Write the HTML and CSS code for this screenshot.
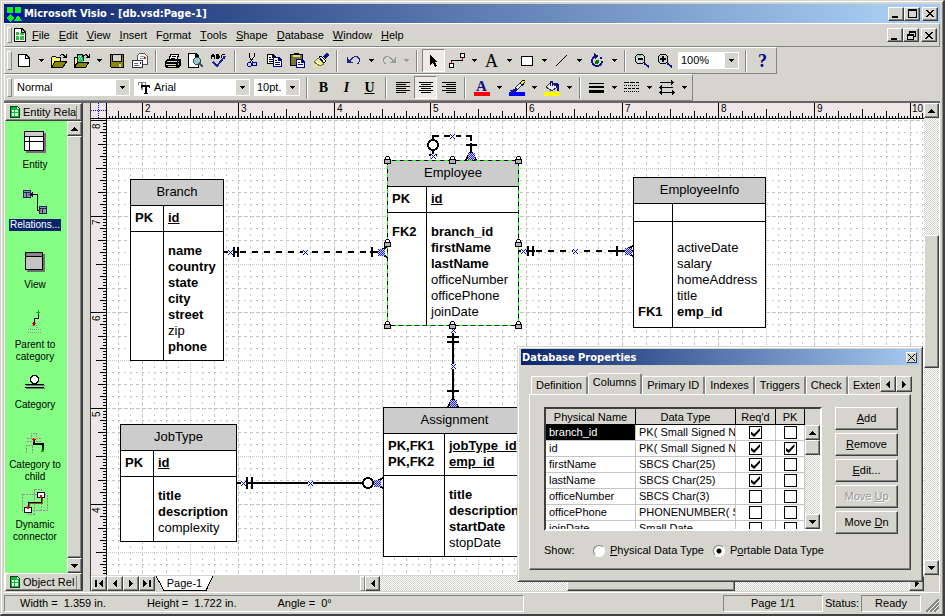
FILE: index.html
```html
<!DOCTYPE html>
<html lang="en">
<head>
<meta charset="utf-8">
<title>Microsoft Visio - [db.vsd:Page-1]</title>
<link rel="stylesheet" href="styles.css">
</head>
<body>
<svg class="defs" aria-hidden="true">
  <symbol id="down" viewBox="0 0 5 3"><path d="M0 0h5v1H0zM1 1h3v1H1zM2 2h1v1H2z"/></symbol>
  <symbol id="sdown" viewBox="0 0 7 4"><path d="M0 0h7v1H0zM1 1h5v1H1zM2 2h3v1H2zM3 3h1v1H3z"/></symbol>
  <symbol id="sup" viewBox="0 0 7 4"><path d="M0 3h7v1H0zM1 2h5v1H1zM2 1h3v1H2zM3 0h1v1H3z"/></symbol>
  <symbol id="sleft" viewBox="0 0 4 7"><path d="M3 0h1v7H3zM2 1h1v5H2zM1 2h1v3H1zM0 3h1v1H0z"/></symbol>
  <symbol id="sright" viewBox="0 0 4 7"><path d="M0 0h1v7H0zM1 1h1v5H1zM2 2h1v3H2zM3 3h1v1H3z"/></symbol>
  <symbol id="x" viewBox="0 0 8 7"><path d="M0 0h2v1H0zM1 1h2v1H1zM2 2h2v1H2zM3 3h2v1H3zM4 4h2v1H4zM5 5h2v1H5zM6 6h2v1H6zM6 0h2v1H6zM5 1h2v1H5zM4 2h2v1H4zM2 4h2v1H2zM1 5h2v1H1zM0 6h2v1H0z"/></symbol>
  <symbol id="stencil" viewBox="0 0 10 12"><path d="M0 0h7l3 3v9H0z" fill="#040"/><path d="M1 1h6l2 2v8H1z" fill="#0b4"/><path d="M7 1l2 2H7z" fill="#fff"/><path d="M2 4h2v2H2zM5 4h3v2H5zM2 7h2v3H2zM5 7h3v3H5z" fill="#efe"/></symbol>
  <symbol id="lock" viewBox="0 0 7 8"><path d="M2 0h3v1H2zM1 1h1v3H1zM5 1h1v3H5zM0 3h7v5H0z"/><path d="M2 1h3v2H2z" fill="#fff"/><path d="M1 4h5v3H1z" fill="#b4b4b4"/></symbol>
  <symbol id="glue" viewBox="0 0 5 5"><path d="M0 0h5v5H0z" fill="#fff"/><path d="M0 0h1v1H0zM4 0h1v1H4zM1 1h1v1H1zM3 1h1v1H3zM2 2h1v1H2zM1 3h1v1H1zM3 3h1v1H3zM0 4h1v1H0zM4 4h1v1H4z" fill="#00f"/></symbol>
  <symbol id="hash" viewBox="0 0 7 7"><path d="M0 0h7v7H0z" fill="#ccccf4"/><path d="M0 0h1v1H0zM2 0h1v1H2zM4 0h1v1H4zM6 0h1v1H6zM1 1h1v1H1zM3 1h1v1H3zM5 1h1v1H5zM0 2h1v1H0zM2 2h1v1H2zM4 2h1v1H4zM6 2h1v1H6zM1 3h1v1H1zM3 3h1v1H3zM5 3h1v1H5zM0 4h1v1H0zM2 4h1v1H2zM4 4h1v1H4zM6 4h1v1H6zM1 5h1v1H1zM3 5h1v1H3zM5 5h1v1H5zM0 6h1v1H0zM2 6h1v1H2zM4 6h1v1H4zM6 6h1v1H6z" fill="#22c"/></symbol>
</svg>

<div class="window">
  <header class="titlebar">
    <svg class="applogo" width="16" height="16"><path d="M0 0h16v16H0z" fill="#00c"/><circle cx="4" cy="4" r="3.5" fill="#0f0"/><path d="M9 1h6v6H9zM4 8l4 4-4 4-4-4zM12 9l4 6H8z" fill="#0f0"/></svg>
    <h1>Microsoft Visio - [db.vsd:Page-1]</h1>
    <div class="winbtns">
      <button aria-label="Minimize"><svg width="8" height="9"><path d="M0 7h6v2H0z"/></svg></button>
      <button aria-label="Maximize"><svg width="9" height="9"><path d="M0 0h9v9H0zM1 2v6h7V2z" fill-rule="evenodd"/></svg></button>
      <button class="apart" aria-label="Close"><svg width="8" height="7"><use href="#x"/></svg></button>
    </div>
  </header>

  <nav class="menubar">
    <svg class="docicon" width="12" height="14"><path d="M0 0h8l4 4v10H0z"/><path d="M1 1h6v4h4v8H1z" fill="#fff"/><path d="M8 2l2 2H8z" fill="#ccc"/><path d="M2 4h3v3H2zM6 5h4v2H6zM2 8h3v4H2zM6 8h4v4H6z" fill="#3b4"/></svg>
    <button><u>F</u>ile</button><button><u>E</u>dit</button><button><u>V</u>iew</button><button><u>I</u>nsert</button><button>F<u>o</u>rmat</button><button><u>T</u>ools</button><button><u>S</u>hape</button><button><u>D</u>atabase</button><button><u>W</u>indow</button><button><u>H</u>elp</button>
    <div class="winbtns">
      <button aria-label="Minimize document"><svg width="8" height="9"><path d="M0 7h6v2H0z"/></svg></button>
      <button aria-label="Restore document"><svg width="9" height="9"><path d="M2 0h7v6H7v3H0V3h2zM3 2v1h4v2h1V2zM1 5v3h5V5z" fill-rule="evenodd"/></svg></button>
      <button class="apart" aria-label="Close document"><svg width="8" height="7"><use href="#x"/></svg></button>
    </div>
  </nav>

  <div class="toolrow"><div class="toolbar">
    <button class="tb" aria-label="New"><svg width="12" height="13"><path d="M0 0h8l4 4v9H0z"/><path d="M1 1h6v4h4v7H1z" fill="#fff"/><path d="M8 2l2 2H8z" fill="#fff"/></svg></button>
    <button class="dd" aria-label="New options"><svg width="5" height="3"><use href="#down"/></svg></button>
    <button class="tb" aria-label="Open"><svg width="16" height="14"><path d="M0 3h1V2h4v1h5v4H0zM0 7h1v7H0z"/><path d="M1 3h4v1h4v3H5L2 12H1z" fill="#ff6"/><path d="M4 7h12l-4 6H1z" fill="#880" stroke="#000"/><path d="M9 1h1V0h3v1h1v1h1V0h1v4h-4V3h1V2h-1V1h-2v1H9z"/></svg></button>
    <button class="tb" aria-label="Open stencil"><svg width="16" height="14"><path d="M0 3h3V0h6l1 2v5H4l-3 6H0z"/><path d="M1 4h2v4l-2 3z" fill="#ff6"/><path d="M4 1h4v2h1v5H4z" fill="#2c6"/><path d="M4 2h1v1H4zM6 2h1v1H6zM5 4h1v1H5zM7 4h1v1H7zM4 6h1v1H4z" fill="#dfd"/><path d="M4 8h11l-3 5H1z" fill="#880" stroke="#000"/><path d="M10 1h1V0h2v1h1v1h1V0h1v4h-4V3h1V2h-1V1h-1v1h-1z"/></svg></button>
    <button class="dd" aria-label="Stencil options"><svg width="5" height="3"><use href="#down"/></svg></button>
    <button class="tb" aria-label="Save"><svg width="14" height="14"><path d="M0 0h14v14H1l-1-1z"/><path d="M1 1h1v7h10V1h1v12H1z" fill="#880"/><path d="M3 1h8v6H3zM9 10h2v3H9z" fill="#d4d3cc"/></svg></button>
    <button class="tb" aria-label="Mail"><svg width="16" height="15"><path d="M5 3l3-3h4l3 3v8H5z" fill="#fff" stroke="#555"/><path d="M8 3h5M8 5h5" stroke="#999"/><path d="M0 7h11v8H0z" fill="#333"/><path d="M1 8h9v6H1z" fill="#fff"/><path d="M2 10h4v1H2zM2 12h5v1H2z" fill="#667"/><path d="M8 9h1v2H8z" fill="#00c"/><path d="M12 4h2v2h-2z" fill="#c22"/></svg></button>
    <span class="sep"></span>
    <button class="tb" aria-label="Print"><svg width="16" height="14"><path d="M4 5l2-5h8l-2 5z" fill="#fff" stroke="#000"/><path d="M7 2h4M6 4h4" stroke="#000"/><path d="M0 7l3-2h12l1 1v5l-3 3H1l-1-2z"/><path d="M2 7h10v1H2zM1 10h10v1H1zM3 12h8v1H3z" fill="#ddd"/><path d="M13 7h1v1h-1zM13 9h1v2h-1z" fill="#aaa"/><path d="M8 10h2v1H8z" fill="#ff0"/></svg></button>
    <button class="tb" aria-label="Print preview"><svg width="16" height="15"><path d="M0 0h8l3 3v12H0z"/><path d="M1 1h6v3h3v10H1z" fill="#fff"/><circle cx="9" cy="8" r="3.5" fill="#9cc" stroke="#444"/><path d="M8 6h1v1H8z" fill="#0ff"/><path d="M11 10l4 4" stroke="#456" stroke-width="2"/></svg></button>
    <button class="tb" aria-label="Spelling"><svg width="16" height="16"><path d="M1 1h2v1h1v4H3V4H1v2H0V2h1zM5 1h3v2h1v2H8v1H5zM10 2h1V1h3v1h-3v3h3v1h-3V5h-1z"/><path d="M2 9l4 4 8-10" stroke="#22a" stroke-width="2" fill="none"/></svg></button>
    <span class="sep"></span>
    <button class="tb" aria-label="Cut"><svg width="10" height="15"><path d="M2 0v4l4 5M7 0v4L3 9" stroke="#000" fill="none" stroke-width="1"/><circle cx="2.500" cy="11.500" r="2" fill="none" stroke="#00a"/><circle cx="7.500" cy="11" r="2" fill="none" stroke="#00a"/></svg></button>
    <button class="tb" aria-label="Copy"><svg width="16" height="13"><path d="M0 0h6l3 3v7H0z"/><path d="M1 1h4v3h3v5H1z" fill="#fff"/><path d="M2 3h2v1H2zM2 5h5v1H2zM2 7h5v1H2z"/><path d="M6 3h6l3 3v7H6z" fill="#008"/><path d="M7 4h4v3h3v5H7z" fill="#fff"/><path d="M8 6h2v1H8zM8 8h5v1H8zM8 10h5v1H8z" fill="#008"/></svg></button>
    <button class="tb" aria-label="Paste"><svg width="16" height="15"><path d="M0 1h4V0h5v1h4v12H0z"/><path d="M1 2h11v10H1z" fill="#773"/><path d="M3 2h7v2H3z" fill="#dd8"/><path d="M6 6h6l3 3v6H6z" fill="#008"/><path d="M7 7h4v3h3v4H7z" fill="#fff"/><path d="M8 9h2v1H8zM8 11h5v1H8z" fill="#008"/></svg></button>
    <button class="tb" aria-label="Format painter"><svg width="16" height="15"><path d="M10 4l3-4h2l1 2-4 4z" fill="#118"/><path d="M6 4l2-1 5 5-2 2z" fill="#fff" stroke="#000"/><path d="M5 5l6 6-4 2-6-4z" fill="#ee4" stroke="#775"/><path d="M3 8l4 3M5 6l4 4" stroke="#fff"/><path d="M0 13h2v1H0zM3 13h2v1H3zM6 13h1v1H6z" fill="#ff0"/></svg></button>
    <span class="sep"></span>
    <button class="tb" aria-label="Undo"><svg width="14" height="9"><path d="M0 1h1v2h1v1h1V3h1V2h1V1h2V0h4v1h1v1h1v4h-1v2h-2V7h1V6h1V3h-1V2h-1V1H7v1H6v1H5v1H4v2h2v1H0z" fill="#228"/></svg></button>
    <button class="dd" aria-label="Undo options"><svg width="5" height="3"><use href="#down"/></svg></button>
    <button class="tb dim" aria-label="Redo" disabled><svg width="14" height="9"><path d="M14 1h-1v2h-1v1h-1V3h-1V2H9V1H7V0H3v1H2v1H1v4h1v2h2V7H3V6H2V3h1V2h1V1h3v1h1v1h1v1h1v2H8v1h6z"/></svg></button>
    <button class="dd dim" aria-label="Redo options" disabled><svg width="5" height="3"><use href="#down"/></svg></button>
    <span class="sep"></span>
    <button class="tb on" aria-label="Pointer tool"><svg width="8" height="12"><path d="M0 0l8 7H5l2 4-2 1-2-4-3 2z"/></svg></button>
    <button class="tb" aria-label="Connector tool"><svg width="16" height="15"><path d="M2 10V7h11V4" fill="none" stroke="#000" stroke-width="1"/><path d="M11 0h5v5h-5zM0 10h5v5H0z"/><path d="M12 1h3v3h-3zM1 11h3v3H1z" fill="#fff"/><path d="M13 5h1v2h-1zM2 8h1v2H2z" fill="#e00"/></svg></button>
    <button class="dd" aria-label="Connector options"><svg width="5" height="3"><use href="#down"/></svg></button>
    <button class="tb serif" aria-label="Text tool">A</button>
    <button class="dd" aria-label="Text options"><svg width="5" height="3"><use href="#down"/></svg></button>
    <button class="tb" aria-label="Rectangle tool"><svg width="12" height="10"><path d="M0 0h12v10H0z"/><path d="M1 1h10v8H1z" fill="#fff"/></svg></button>
    <button class="dd" aria-label="Rectangle options"><svg width="5" height="3"><use href="#down"/></svg></button>
    <button class="tb" aria-label="Line tool"><svg width="12" height="12"><path d="M0 11L11 0" stroke="#000"/></svg></button>
    <button class="dd" aria-label="Line options"><svg width="5" height="3"><use href="#down"/></svg></button>
    <button class="tb" aria-label="Rotation tool"><svg width="14" height="15"><path d="M6 3a5 5 0 1 0 6 5" fill="none" stroke="#118" stroke-width="2"/><path d="M4 0l5 3-4 3zM10 4h2v2h-2z" fill="#118"/><circle cx="7" cy="9" r="2" fill="#070"/></svg></button>
    <button class="dd" aria-label="Rotation options"><svg width="5" height="3"><use href="#down"/></svg></button>
    <span class="sep"></span>
    <button class="tb" aria-label="Zoom out"><svg width="16" height="15"><circle cx="6" cy="6" r="5" fill="#d4d3cc" stroke="#000"/><path d="M3 3h1v1H3zM5 2h2v1H5zM2 8h1v1H2z" fill="#0ee"/><path d="M4 5h5v2H4z"/><path d="M10 10l5 4" stroke="#118" stroke-width="2"/></svg></button>
    <button class="tb" aria-label="Zoom in"><svg width="16" height="15"><circle cx="6" cy="6" r="5" fill="#d4d3cc" stroke="#000"/><path d="M3 3h1v1H3zM2 8h1v1H2z" fill="#0ee"/><path d="M3 5h6v2H3zM5 3h2v6H5z"/><path d="M10 10l5 4" stroke="#118" stroke-width="2"/></svg></button>
    <span class="combo zoom"><select aria-label="Zoom"><option>100%</option></select><span class="combo-arrow"><svg width="5" height="3"><use href="#down"/></svg></span></span>
    <span class="sep"></span>
    <button class="tb serif help" aria-label="Help">?</button>
  </div></div>

  <div class="toolrow"><div class="toolbar">
    <span class="combo style"><select aria-label="Style"><option>Normal</option></select><span class="combo-arrow"><svg width="5" height="3"><use href="#down"/></svg></span></span>
    <span class="combo font"><svg class="tt" width="12" height="12"><path d="M0 0h8v3H7V1H5v7H3V1H1v2H0z" fill="#888"/><path d="M3 3h9v3h-1V5H9v6h1v1H6v-1h1V5H4v1H3z"/></svg><select aria-label="Font"><option>Arial</option></select><span class="combo-arrow"><svg width="5" height="3"><use href="#down"/></svg></span></span>
    <span class="combo size"><select aria-label="Font size"><option>10pt.</option></select><span class="combo-arrow"><svg width="5" height="3"><use href="#down"/></svg></span></span>
    <span class="sep"></span>
    <button class="tb fmt" aria-label="Bold"><b>B</b></button>
    <button class="tb fmt" aria-label="Italic"><i>I</i></button>
    <button class="tb fmt" aria-label="Underline"><u>U</u></button>
    <span class="sep"></span>
    <button class="tb" aria-label="Align left"><svg width="14" height="11"><path d="M0 0h14v1H0zM0 2h10v1H0zM0 4h14v1H0zM0 6h10v1H0zM0 8h14v1H0zM0 10h10v1H0z"/></svg></button>
    <button class="tb on" aria-label="Center"><svg width="14" height="11"><path d="M0 0h14v1H0zM2 2h10v1H2zM0 4h14v1H0zM2 6h10v1H2zM0 8h14v1H0zM2 10h10v1H2z"/></svg></button>
    <button class="tb" aria-label="Align right"><svg width="14" height="11"><path d="M0 0h14v1H0zM4 2h10v1H4zM0 4h14v1H0zM4 6h10v1H4zM0 8h14v1H0zM4 10h10v1H4z"/></svg></button>
    <span class="sep"></span>
    <button class="tb swatch red" aria-label="Font color"><span>A</span></button>
    <button class="dd" aria-label="Font color options"><svg width="5" height="3"><use href="#down"/></svg></button>
    <button class="tb" aria-label="Line color"><svg width="16" height="16"><path d="M11 3l3-3h2v2l-3 4z" fill="#ee0" stroke="#000"/><path d="M6 8l5-5 2 2-5 5z" fill="#fff" stroke="#226"/><path d="M0 10h3l4-2 2 2-3 2H2z" fill="#118"/><path d="M0 12h16v4H0z" fill="#00f"/></svg></button>
    <button class="dd" aria-label="Line color options"><svg width="5" height="3"><use href="#down"/></svg></button>
    <button class="tb" aria-label="Fill color"><svg width="16" height="16"><path d="M2 7l5-5 6 5-5 4z" fill="#e8e8e8" stroke="#333"/><path d="M6 6V1h2v5" fill="none" stroke="#118"/><path d="M10 3h3l2 2v6h-2V7z" fill="#118"/><path d="M0 12h16v4H0z" fill="#ff0"/></svg></button>
    <button class="dd" aria-label="Fill color options"><svg width="5" height="3"><use href="#down"/></svg></button>
    <span class="sep"></span>
    <button class="tb" aria-label="Line weight"><svg width="15" height="10"><path d="M0 0h15v1H0zM0 3h15v2H0zM0 7h15v3H0z"/></svg></button>
    <button class="dd" aria-label="Line weight options"><svg width="5" height="3"><use href="#down"/></svg></button>
    <button class="tb" aria-label="Line pattern"><svg width="15" height="11"><path d="M0 .5h15" stroke="#000" stroke-dasharray="5 1"/><path d="M0 3.500h15M0 9.500h15" stroke="#000" stroke-dasharray="1 1"/><path d="M0 6.500h15" stroke="#000" stroke-dasharray="3 1"/></svg></button>
    <button class="dd" aria-label="Line pattern options"><svg width="5" height="3"><use href="#down"/></svg></button>
    <button class="tb" aria-label="Line ends"><svg width="16" height="15"><path d="M1 2h14v1H1zM12 0h1v5h-1zM13 1h1v3h-1zM0 7h14v1H0zM2 5h1v5H2zM1 6h1v3H1zM0 12h16v1H0zM2 10h1v5H2zM1 11h1v3H1zM13 10h1v5h-1zM14 11h1v3h-1z"/></svg></button>
    <button class="dd" aria-label="Line ends options"><svg width="5" height="3"><use href="#down"/></svg></button>
  </div></div>

  <main class="workspace">
    <aside class="stencils">
      <button class="stencil-head"><svg width="10" height="12"><use href="#stencil"/></svg><span>Entity Rela</span></button>
      <div class="stencil-body">
        <ul class="shapes">
          <li><svg width="22" height="22"><path d="M2 2h20v20H2z" fill="#767"/><path d="M0 0h20v20H0z"/><path d="M1 1h18v4H1z" fill="#ccc"/><path d="M1 6h4v4H1zM6 6h13v4H6zM1 11h4v8H1zM6 11h13v8H6z" fill="#fff"/></svg><span>Entity</span></li>
          <li class="selected"><svg width="24" height="24"><path d="M0 0h8v8H0zM16 16h8v8h-8z" fill="#225"/><path d="M1 1h6v1H1zM1 3h2v4H1zM4 3h3v4H4zM17 17h6v1h-6zM17 19h2v4h-2zM20 19h3v4h-3z" fill="#89b"/><path d="M6 4h8v16h3" fill="none" stroke="#000"/><path d="M7 4l3-3v7z" fill="#005"/><path d="M5 4h2v1H5zM16 20h2v1h-2z" fill="#e00"/></svg><span>Relations...</span></li>
          <li><svg width="20" height="20"><path d="M2 2h18v18H2z" fill="#676"/><path d="M0 0h18v18H0z"/><path d="M1 1h16v3H1z" fill="#888"/><path d="M1 5h16v12H1z" fill="#c4c4c4"/></svg><span>View</span></li>
          <li><svg width="16" height="24"><path d="M11 2v6H7v7" fill="none" stroke="#000"/><path d="M11 0h1v4h-1zM9 2h4v1H9z" fill="#0b0"/><path d="M6 12h1v4H6zM5 13h4v1H5z" fill="#e00"/><path d="M3 19a4 4 0 0 1 8 0M1 19.500h13M1 22.500h13" fill="none" stroke="#989" stroke-dasharray="1 1"/></svg><span>Parent to category</span></li>
          <li><svg width="20" height="14"><path d="M1 10h19v1H1zM1 13h19v1H1z" fill="#777"/><path d="M0 9h19v1H0zM0 12h19v1H0z"/><circle cx="9.500" cy="4.500" r="4" fill="#fff" stroke="#000" stroke-width="1.500"/></svg><span>Category</span></li>
          <li><svg width="20" height="24"><path d="M6 7V3h5v4M2 8.500h14M2 11.500h14M1.500 23v-8h6v8" fill="none" stroke="#989" stroke-dasharray="2 1"/><path d="M9 10v4h9v7" fill="none" stroke="#000" stroke-width="2"/><path d="M8 8h1v4H8zM7 9h4v1H7z" fill="#e00"/><path d="M16 20h3v2h-3z" fill="#0b0"/></svg><span>Category to child</span></li>
          <li><svg width="26" height="26"><path d="M.5 5.500h19v16H.5zM12.500.5h7v13h-7zM19 5.500h6v16h-8M6 12v13h6V14" fill="none" stroke="#989" stroke-dasharray="2 1"/><path d="M7 19v-5h13V8" fill="none" stroke="#860" stroke-width="2"/><path d="M6 18v-5h13V7" fill="none" stroke="#000"/><path d="M15 3h7v5h-7zM2 18h7v5H2z" fill="#fff" stroke="#000"/><path d="M18 6h2v3h-2zM5 17h2v3H5z" fill="#e00"/></svg><span>Dynamic connector</span></li>
        </ul>
        <div class="vscroll">
          <button class="sb" aria-label="Scroll up"><svg width="7" height="4"><use href="#sup"/></svg></button>
          <div class="thumb"></div>
          <button class="sb" aria-label="Scroll down"><svg width="7" height="4"><use href="#sdown"/></svg></button>
        </div>
      </div>
      <button class="stencil-head"><svg width="10" height="12"><use href="#stencil"/></svg><span>Object Rel</span></button>
    </aside>

    <section class="drawing">
      <div class="corner"><svg width="15" height="15"><path d="M0 7.500h15M7.500 0v15" stroke="#00f" stroke-dasharray="1 1"/></svg></div>
      <svg class="hruler" width="100%" height="16">
        <defs><pattern id="ht" x="35" width="96" height="16" patternUnits="userSpaceOnUse">
          <path d="M.5 0v16M48.500 6v10M24.500 8v8M72.500 8v8M12.500 10v6M36.500 10v6M60.500 10v6M84.500 10v6" stroke="#000"/>
          <path d="M3 14.500h93" stroke="#000" stroke-width="3" stroke-dasharray="1 2"/>
        </pattern></defs>
        <rect width="100%" height="16" fill="url(#ht)"/>
        <g class="rnum"><text x="38" y="9">2</text><text x="134" y="9">3</text><text x="230" y="9">4</text><text x="326" y="9">5</text><text x="422" y="9">6</text><text x="518" y="9">7</text><text x="614" y="9">8</text><text x="710" y="9">9</text><text x="805" y="9">10</text></g>
      </svg>
      <svg class="vruler" width="15" height="100%">
        <defs><pattern id="vt" y="1" width="16" height="96" patternUnits="userSpaceOnUse">
          <path d="M0 .5h15M5 48.500h11M7 24.500h9M7 72.500h9M9 12.500h7M9 36.500h7M9 60.500h7M9 84.500h7" stroke="#000"/>
          <path d="M13.500 3v93" stroke="#000" stroke-width="3" stroke-dasharray="1 2"/>
        </pattern></defs>
        <rect width="15" height="100%" fill="url(#vt)"/>
        <g class="rnum"><text transform="translate(9 10) rotate(-90)">8</text><text transform="translate(9 106) rotate(-90)">7</text><text transform="translate(9 202) rotate(-90)">6</text><text transform="translate(9 298) rotate(-90)">5</text><text transform="translate(9 394) rotate(-90)">4</text></g>
      </svg>
      <div class="vscroll main">
        <button class="sb" aria-label="Scroll up"><svg width="7" height="4"><use href="#sup"/></svg></button>
        <div class="track"></div><div class="thumb"></div><div class="track long"></div>
        <button class="sb" aria-label="Scroll down"><svg width="7" height="4"><use href="#sdown"/></svg></button>
      </div>

      <div class="canvas">
        <svg class="grid" width="100%" height="100%">
          <defs><pattern id="gp" x="35" y="1" width="96" height="96" patternUnits="userSpaceOnUse">
            <g stroke="#c3c3c3" fill="none">
              <path d="M.5 0v96M0 .5h96" stroke-dasharray="4 2"/>
              <path d="M24.500 0v96M72.500 0v96M0 24.500h96M0 72.500h96" stroke-dasharray="3 3"/>
              <path d="M48.500 0v96M0 48.500h96" stroke-dasharray="1 1"/>
              <path d="M12.500 0v96M36.500 0v96M60.500 0v96M84.500 0v96M0 12.500h96M0 36.500h96M0 60.500h96M0 84.500h96" stroke-dasharray="2 4"/>
            </g>
          </pattern></defs>
          <rect width="100%" height="100%" fill="url(#gp)"/>
        </svg>

        <article class="entity branch"><h2>Branch</h2>
          <div class="row"><p>PK</p><p><u>id</u></p></div>
          <div class="row attrs"><p></p><p>name<br>country<br>state<br>city<br>street<br><span>zip</span><br>phone</p></div>
        </article>
        <article class="entity employee"><h2>Employee</h2>
          <div class="row"><p>PK</p><p><u>id</u></p></div>
          <div class="row attrs"><p>FK2</p><p>branch_id<br>firstName<br>lastName<br><span>officeNumber<br>officePhone<br>joinDate</span></p></div>
        </article>
        <article class="entity info"><h2>EmployeeInfo</h2>
          <div class="row empty"><p></p><p></p></div>
          <div class="row attrs"><p>FK1</p><p><span>activeDate<br>salary<br>homeAddress<br>title</span><br>emp_id</p></div>
        </article>
        <article class="entity jobtype"><h2>JobType</h2>
          <div class="row"><p>PK</p><p><u>id</u></p></div>
          <div class="row attrs"><p></p><p>title<br>description<br><span>complexity</span></p></div>
        </article>
        <article class="entity assignment"><h2>Assignment</h2>
          <div class="row"><p>PK,FK1<br>PK,FK2</p><p><u>jobType_id</u><br><u>emp_id</u></p></div>
          <div class="row attrs"><p></p><p>title<br>description<br>startDate<br><span>stopDate</span></p></div>
        </article>

        <svg class="links" width="100%" height="100%"><g transform="translate(-107 -119)">
          <g fill="none" stroke="#000" stroke-width="2">
            <path d="M240 252h132M536 251h80" stroke-dasharray="6 6"/>
            <path d="M224 252h14M370 252h10M519 251h16M614 251h10M237 483h126M453 326v81"/>
            <path d="M433 140v-4h6M444 136h6M456 136h5M466 136h5v5M471 143v11M433 150v8"/>
            <path d="M234 247v10M238 247v10M372 247v10M528 246v10M533 246v10M617 246v10M247 477v12M252 477v12M447 337h12M447 342h12M447 391h12M466 145h11M429 155h8"/>
            <path d="M378 252l9-5M378 252l9 5M624 251l9-5M624 251l9 5M624 251h9M373 483l10-5M373 483l10 5M453 398l-5 9M453 398l5 9M471 151l-5 9M471 151l5 9"/>
            <circle cx="433" cy="145" r="5" fill="#fff"/><circle cx="368" cy="483" r="5" fill="#fff"/>
          </g>
          <use href="#glue" x="228" y="250" width="5" height="5"/><use href="#glue" x="303" y="250" width="5" height="5"/><use href="#glue" x="521" y="249" width="5" height="5"/><use href="#glue" x="573" y="249" width="5" height="5"/><use href="#glue" x="241" y="481" width="5" height="5"/><use href="#glue" x="308" y="481" width="5" height="5"/><use href="#glue" x="451" y="328" width="5" height="5"/><use href="#glue" x="451" y="364" width="5" height="5"/><use href="#glue" x="450" y="134" width="5" height="5"/><use href="#glue" x="431" y="154" width="5" height="5"/>
          <use href="#hash" x="378" y="249" width="7" height="7"/><use href="#hash" x="625" y="248" width="7" height="7"/><use href="#hash" x="374" y="480" width="7" height="7"/><use href="#hash" x="450" y="400" width="7" height="7"/><use href="#hash" x="468" y="153" width="7" height="7"/>
          <rect x="387.500" y="160.500" width="131" height="165" fill="none" stroke="#000"/>
          <rect x="387.500" y="160.500" width="131" height="165" fill="none" stroke="#0f0" stroke-dasharray="4 4"/>
          <use href="#lock" x="384" y="156" width="7" height="8"/><use href="#lock" x="449" y="156" width="7" height="8"/><use href="#lock" x="515" y="156" width="7" height="8"/><use href="#lock" x="384" y="239" width="7" height="8"/><use href="#lock" x="515" y="239" width="7" height="8"/><use href="#lock" x="384" y="321" width="7" height="8"/><use href="#lock" x="449" y="321" width="7" height="8"/><use href="#lock" x="515" y="321" width="7" height="8"/>
        </g></svg>
      </div>

      <div class="pagebar">
        <div class="pagenav">
          <button class="sb" aria-label="First page"><svg width="8" height="7"><path d="M0 0h2v7H0z"/><use href="#sleft" x="4" width="4" height="7"/></svg></button>
          <button class="sb" aria-label="Previous page"><svg width="4" height="7"><use href="#sleft"/></svg></button>
          <button class="sb" aria-label="Next page"><svg width="4" height="7"><use href="#sright"/></svg></button>
          <button class="sb" aria-label="Last page"><svg width="8" height="7"><path d="M6 0h2v7H6z"/><use href="#sright" x="0" width="4" height="7"/></svg></button>
        </div>
        <button class="pagetab"><svg width="57" height="15"><path d="M0 0l8 15h42l7-15z" fill="#fff"/><path d="M0 0l8 14.500h42L57 0" fill="none" stroke="#000"/></svg><span>Page-1</span></button>
        <div class="hscroll">
          <span class="split"></span>
          <button class="sb" aria-label="Scroll left"><svg width="4" height="7"><use href="#sleft"/></svg></button>
          <div class="track"></div><div class="thumb"></div><div class="track short"></div>
          <button class="sb" aria-label="Scroll right"><svg width="4" height="7"><use href="#sright"/></svg></button>
        </div>
      </div>
    </section>

    <section class="dialog" role="dialog" aria-labelledby="dlg-title">
      <header><h2 id="dlg-title">Database Properties</h2><button aria-label="Close dialog"><svg width="7" height="7"><path d="M0 0l7 7M7 0L0 7" stroke="#000"/></svg></button></header>
      <div class="tabs">
        <button>Definition</button><button class="active">Columns</button><button>Primary ID</button><button>Indexes</button><button>Triggers</button><button>Check</button><button class="cut">Extend</button>
        <span class="tabnav"><button class="sb" aria-label="Previous tab"><svg width="4" height="7"><use href="#sleft"/></svg></button><button class="sb" aria-label="Next tab"><svg width="4" height="7"><use href="#sright"/></svg></button></span>
      </div>
      <div class="pane">
        <div class="listbox">
          <div class="tablewrap"><table>
            <thead><tr><th>Physical Name</th><th>Data Type</th><th>Req'd</th><th>PK</th></tr></thead>
            <tbody>
              <tr><td class="sel">branch_id</td><td>PK( Small Signed N</td><td><input type="checkbox" aria-label="branch_id required" checked></td><td><input type="checkbox" aria-label="branch_id primary key"></td></tr>
              <tr><td>id</td><td>PK( Small Signed N</td><td><input type="checkbox" aria-label="id required" checked></td><td><input type="checkbox" aria-label="id primary key" checked></td></tr>
              <tr><td>firstName</td><td>SBCS Char(25)</td><td><input type="checkbox" aria-label="firstName required" checked></td><td><input type="checkbox" aria-label="firstName primary key"></td></tr>
              <tr><td>lastName</td><td>SBCS Char(25)</td><td><input type="checkbox" aria-label="lastName required" checked></td><td><input type="checkbox" aria-label="lastName primary key"></td></tr>
              <tr><td>officeNumber</td><td>SBCS Char(3)</td><td><input type="checkbox" aria-label="officeNumber required"></td><td><input type="checkbox" aria-label="officeNumber primary key"></td></tr>
              <tr><td>officePhone</td><td>PHONENUMBER( S</td><td><input type="checkbox" aria-label="officePhone required"></td><td><input type="checkbox" aria-label="officePhone primary key"></td></tr>
              <tr><td>joinDate</td><td>Small Date</td><td><input type="checkbox" aria-label="joinDate required"></td><td><input type="checkbox" aria-label="joinDate primary key"></td></tr>
            </tbody>
          </table></div>
          <div class="vscroll">
            <button class="sb" aria-label="Scroll up"><svg width="7" height="4"><use href="#sup"/></svg></button>
            <div class="thumb"></div><div class="track"></div>
            <button class="sb" aria-label="Scroll down"><svg width="7" height="4"><use href="#sdown"/></svg></button>
          </div>
        </div>
        <div class="actions">
          <button><u>A</u>dd</button><button><u>R</u>emove</button><button><u>E</u>dit...</button><button disabled>Move <u>U</u>p</button><button>Move <u>D</u>n</button>
        </div>
        <div class="show"><span>Show:</span>
          <label><input type="radio" name="show"><span><u>P</u>hysical Data Type</span></label>
          <label><input type="radio" name="show" checked><span>P<u>o</u>rtable Data Type</span></label>
        </div>
      </div>
    </section>
  </main>

  <footer class="status">
    <div class="cell dims"><span>Width =&nbsp; 1.359 in.</span><span>Height =&nbsp; 1.722 in.</span><span>Angle =&nbsp; 0°</span></div>
    <div class="fill"></div>
    <div class="cell page">Page 1/1</div>
    <span class="lbl">Status:</span>
    <div class="cell ready">Ready</div>
    <svg class="sizer" width="13" height="13"><path d="M0 13L13 0M4 13l9-9M8 13l5-5" stroke="#888" stroke-width="2"/><path d="M2 13L13 2M6 13l7-7M10 13l3-3" stroke="#fff"/></svg>
  </footer>
</div>
</body>
</html>
```
FILE: styles.css
```css
:root {
  --face: #d5d4cd;
  --shade: #848484;
  --dark: #404040;
  --ui: "Liberation Sans", Arial, sans-serif;
  --title: "DejaVu Sans Condensed", "DejaVu Sans", sans-serif;
}
* { box-sizing: border-box; }
body { margin: 0; font: 11px/13px var(--ui); color: #000; background: var(--face); }
button { font: inherit; color: inherit; padding: 0; margin: 0; border: 0; background: none; display: flex; align-items: center; justify-content: center; white-space: pre; }
h1, h2, p, ul { margin: 0; padding: 0; }
svg { display: block; shape-rendering: crispEdges; flex: none; }
.defs { position: absolute; width: 0; height: 0; }

.window { height: 100vh; display: flex; flex-direction: column; padding: 2px 3px 1px 2px; border: 1px solid var(--face); border-right: 2px solid var(--dark); border-bottom: 2px solid var(--dark); box-shadow: inset 1px 1px #fff, inset -1px 0 var(--shade); overflow: hidden; }
.titlebar { display: flex; align-items: center; height: 19px; margin: 1px 0 0 1px; padding: 0 2px; gap: 2px; background: linear-gradient(90deg, #0a246a, #a6caf0 94%); color: #fff; }
.titlebar h1 { font: bold 11px/16px var(--title); flex: 1; }
.winbtns { display: flex; margin-left: auto; color: #000; }
.winbtns button { width: 16px; height: 14px; background: var(--face); border: 1px solid; border-color: #fff var(--dark) var(--dark) #fff; box-shadow: inset -1px -1px var(--shade); }
.winbtns .apart { margin-left: 2px; }

.menubar { display: flex; align-items: center; height: 24px; margin-left: 1px; padding: 0 2px 0 9px; border: 1px solid; border-color: #fff var(--shade) var(--shade) #fff; }
.menubar > button { padding: 0 4px 0 5px; }
.docicon { margin-right: 1px; }
.menubar, .toolbar { position: relative; }
.menubar::before, .toolbar::before { content: ""; position: absolute; left: 2px; top: 3px; bottom: 3px; width: 3px; border: 1px solid; border-color: #fff var(--shade) var(--shade) #fff; }

.toolrow { display: flex; margin-left: 1px; }
.toolbar { display: flex; align-items: center; height: 27px; padding: 0 2px 0 7px; border: 1px solid; border-color: #fff var(--shade) var(--shade) #fff; }
.tb { width: 23px; height: 23px; }
.dd { width: 12px; height: 23px; }
.dim { color: #999; }
.dim svg { fill: #999; }
.on { background: #efe9e7; border: 1px solid; border-color: var(--shade) #fff #fff var(--shade); }
.sep { width: 2px; height: 22px; margin: 0 4px; border-left: 1px solid var(--shade); border-right: 1px solid #fff; }
.serif { font: 18px/20px "Liberation Serif", serif; }
.help { color: #008; font-weight: bold; }
.fmt { font: bold 14px/16px "Liberation Serif", serif; }
.swatch span { width: 16px; height: 16px; border-bottom: 4px solid; font: bold 15px/12px "Liberation Serif", serif; text-align: center; color: #118; }
.red span { border-color: #f00; }
.combo { display: flex; align-items: center; height: 17px; background: #fff; position: relative; }
.combo select { appearance: none; border: 0; background: none; margin: 0; padding: 0 0 0 3px; font: inherit; color: inherit; flex: 1; width: 0; height: 17px; }
.combo-arrow { position: absolute; right: 1px; top: 1px; bottom: 1px; width: 13px; display: flex; align-items: center; justify-content: center; background: var(--face); pointer-events: none; }
.combo.style { width: 116px; margin: 0 4px 0 2px; }
.combo.font { width: 116px; margin-right: 4px; padding-left: 4px; }
.combo.font select { padding-left: 4px; }
.combo.size { width: 46px; margin-right: 2px; }
.combo.zoom { width: 61px; margin: 0 2px; }

.workspace { flex: 1; min-height: 0; display: flex; position: relative; margin-left: 1px; border-top: 2px solid #666; }
.stencils { width: 79px; display: flex; flex-direction: column; border-left: 1px solid #fff; border-right: 1px solid var(--dark); }
.stencil-head { height: 18px; justify-content: flex-start; gap: 3px; padding: 0 4px; overflow: hidden; border: 1px solid; border-color: #fff var(--dark) var(--dark) #fff; box-shadow: inset -1px -1px var(--shade); }
.stencil-head span { flex: 1; border-right: 1px solid var(--shade); text-align: left; }
.stencil-body { flex: 1; min-height: 0; display: flex; background: #84ff84; }
.shapes { flex: 1; list-style: none; padding-top: 4px; overflow: hidden; font-size: 10px; line-height: 12px; }
.shapes li { height: 60px; display: flex; flex-direction: column; align-items: center; text-align: center; padding: 0 4px 0 2px; }
.shapes svg { margin: auto 0; }
.shapes span { height: 26px; max-width: 54px; flex: none; }
.shapes .selected span { height: 12px; margin-bottom: 14px; max-width: none; background: #0a246a; color: #fff; padding: 0 1px; }

.vscroll { width: 15px; display: flex; flex-direction: column; }
.sb { width: 15px; height: 15px; flex: none; background: var(--face); border: 1px solid; border-color: #fff var(--dark) var(--dark) #fff; box-shadow: inset -1px -1px var(--shade); }
.thumb { flex: 1; background: var(--face); border: 1px solid; border-color: #fff var(--dark) var(--dark) #fff; box-shadow: inset -1px -1px var(--shade); }
.track { background: repeating-conic-gradient(#fff 0 25%, #d0cfc8 0 50%) 0 0 / 2px 2px; }

.drawing { flex: 1; min-width: 0; margin-left: 7px; border-left: 1px solid var(--dark); border-right: 1px solid #fff; display: grid; grid-template: 16px 1fr 16px / 16px 1fr 15px; }
.corner { background: #efe7e7; border-right: 1px solid #000; border-bottom: 1px solid #000; overflow: hidden; }
.hruler { background: #efe7e7; border-bottom: 1px solid #000; }
.vruler { grid-column: 1; grid-row: 2; width: 16px; background: #efe7e7; border-right: 1px solid #000; }
.rnum { font: 10px var(--ui); }
.vscroll.main { grid-column: 3; grid-row: 1 / 3; }
.main .track { flex: 118; }
.main .thumb { flex: 131; }
.main .long { flex: 193; }
.canvas { grid-column: 2; grid-row: 2; position: relative; background: #fff; overflow: hidden; }
.grid, .links { position: absolute; inset: 0; }
.entity { position: absolute; border: 1px solid #000; background: #fff; font: bold 13px/16px var(--ui); }
.entity h2 { font: 13px/16px var(--ui); text-align: center; height: 26px; padding-top: 4px; background: #ccc; border-bottom: 1px solid #000; }
.entity .row { display: grid; grid-template-columns: var(--key) 1fr; border-bottom: 1px solid #000; }
.entity p { padding: 4px 0 5px 4px; white-space: nowrap; overflow: hidden; }
.entity p:first-child { border-right: 1px solid #000; }
.entity .attrs { border-bottom: 0; }
.entity .attrs p { padding: 11px 0 5px 4px; }
.entity span { font-weight: normal; }
.branch { left: 23px; top: 60px; width: 94px; --key: 33px; }
.employee { left: 280px; top: 41px; width: 132px; --key: 39px; }
.info { left: 526px; top: 58px; width: 133px; --key: 39px; }
.info .empty p { padding: 0; height: 17px; }
.info .attrs p { padding: 18px 0 7px 4px; align-content: end; }
.jobtype { left: 13px; top: 305px; width: 117px; --key: 33px; }
.assignment { left: 276px; top: 288px; width: 143px; --key: 61px; }

.pagebar { grid-column: 1 / 4; grid-row: 3; display: flex; align-items: center; background: var(--face); overflow: hidden; }
.pagenav { display: flex; }
.pagenav .sb { width: 16px; }
.pagetab { position: relative; margin-left: 1px; }
.pagetab span { position: absolute; inset: 1px 0 0; }
.hscroll { flex: 0 0 579px; margin-left: auto; display: flex; padding-right: 15px; }
.split { width: 5px; border: 1px solid; border-color: #fff var(--shade) var(--shade) #fff; }
.hscroll .track { flex: 187; }
.hscroll .thumb { flex: 167; }
.hscroll .short { flex: 174; }

.dialog { position: absolute; right: 17px; bottom: 9px; width: 406px; background: var(--face); border: 1px solid; border-color: var(--face) var(--dark) var(--dark) var(--face); box-shadow: inset 1px 1px #fff, inset -1px -1px var(--shade); padding: 2px; }
.dialog > header { display: flex; align-items: center; height: 16px; margin: 0 1px; padding: 0 2px 0 1px; color: #fff; background: linear-gradient(90deg, #0a246a, #a6caf0); }
.dialog h2 { font: bold 11px/15px var(--title); flex: 1; }
.dialog > header button { width: 11px; height: 11px; background: var(--face); border: 1px solid; border-color: #fff var(--dark) var(--dark) #fff; }
.tabs { display: flex; align-items: flex-end; height: 29px; padding: 0 8px 0 11px; position: relative; overflow: hidden; }
.tabs > button { height: 18px; padding: 0 4px; border: solid; border-width: 1px 2px 0 1px; border-color: #fff var(--shade) #fff #fff; border-radius: 2px 2px 0 0; }
.tabs > .active { height: 21px; padding-bottom: 3px; }
.tabs > .cut { flex: 1; width: 0; justify-content: flex-start; overflow: hidden; border-right: 0; }
.tabnav { display: flex; align-self: flex-end; height: 18px; width: 32px; flex: none; }
.tabnav .sb { width: 16px; height: 16px; }
.pane { margin: 0 9px 9px; padding: 12px 12px 12px 14px; display: grid; grid-template-columns: 278px 1fr; gap: 0 13px; border: 1px solid; border-color: #fff var(--dark) var(--dark) #fff; box-shadow: inset -1px -1px var(--shade); }
.listbox { display: flex; height: 124px; border: 2px solid; border-color: var(--dark) #fff #fff var(--dark); }
.tablewrap { flex: 1; overflow: hidden; background: #fff; }
table { width: 100%; border-collapse: separate; border-spacing: 0; table-layout: fixed; }
th { font-weight: normal; height: 16px; padding: 0; line-height: 14px; background: var(--face); border-right: 1px solid #000; border-bottom: 1px solid #000; }
th:nth-child(2) { width: 100px; }
th:nth-child(3) { width: 40px; }
th:nth-child(4) { width: 29px; }
td { height: 16px; padding: 0 0 0 3px; line-height: 15px; white-space: nowrap; overflow: hidden; border-right: 1px solid #c3c3c3; border-bottom: 1px solid #c3c3c3; }
td:nth-child(n+3) { padding: 0; }
td.sel { background: #000; color: #fff; }
input[type="checkbox"] { appearance: none; display: block; margin: 1px auto; width: 13px; height: 13px; border: 1px solid #000; background: #fff; }
input[type="checkbox"]:checked::before { content: ""; display: block; width: 9px; height: 9px; margin: 1px; background: #000; clip-path: polygon(0 40%, 35% 68%, 100% 0, 100% 30%, 35% 100%, 0 72%); }
.listbox .vscroll { padding-top: 16px; background: var(--face); }
.listbox .thumb { flex: 0 0 15px; }
.listbox .track { flex: 1; }
.actions { display: flex; flex-direction: column; gap: 3px; }
.actions button { height: 23px; background: var(--face); border: 1px solid; border-color: #fff var(--dark) var(--dark) #fff; box-shadow: inset -1px -1px var(--shade); }
.actions button:disabled { color: #999; text-shadow: 1px 1px #fff; }
.show { grid-column: 1 / 3; display: flex; align-items: center; padding-top: 10px; }
.show > span { width: 49px; }
.show label { display: flex; align-items: center; gap: 5px; margin-right: 9px; }
input[type="radio"] { appearance: none; margin: 0; width: 12px; height: 12px; border: 1px solid; border-color: var(--shade) #fff #fff var(--shade); border-radius: 50%; background: #fff; }
input[type="radio"]:checked { background: radial-gradient(circle, #000 2px, #fff 3px); }

.status { display: flex; align-items: center; height: 21px; margin: 1px 0 0 1px; border-top: 1px solid #fff; }
.cell { height: 17px; border: 1px solid; border-color: var(--shade) #fff #fff var(--shade); line-height: 15px; text-align: center; }
.dims { flex: 0 0 520px; display: flex; gap: 41px; padding-left: 15px; text-align: left; }
.fill { flex: 1; }
.page { width: 100px; }
.lbl { width: 38px; text-align: center; }
.ready { width: 60px; }
.sizer { margin: 4px 1px 0 5px; }
```
